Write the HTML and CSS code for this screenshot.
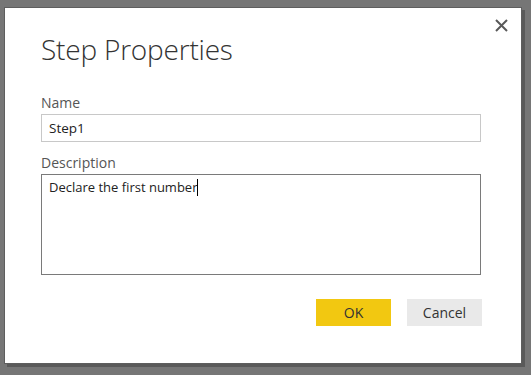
FILE: index.html
```html
<html lang="en"><head>
    <meta charset="UTF-8">
    <meta name="viewport" content="width=device-width, initial-scale=1.0">
    <title>Step Properties</title>
    <link rel="stylesheet" href="styles.css">
</head>
<body>
    <div class="dialog">
        <div class="fechar">
            <svg width="13" height="13" viewBox="0 0 13 13">
                <path d="M1 1 L12 12 M12 1 L1 12" stroke="#595959" stroke-width="2" fill="none"/>
            </svg>
        </div>
        <div class="titulo">Step Properties</div>

        <div class="campo">
            <label for="nome">Name</label>
            <input type="text" id="nome" value="Step1">
        </div>

        <div class="campo">
            <label for="descricao">Description</label>
            <div class="area">Declare the first number<span class="cursor"></span></div>
        </div>

        <div class="botoes">
            <button class="ok">OK</button>
            <button class="cancelar">Cancel</button>
        </div>
    </div>
</body>
</html>
```

FILE: styles.css
```css
body {
    margin: 0;
    padding: 0;
    font-family: "Open Sans", "Noto Sans", sans-serif;
    background: #767676;
    height: 100vh;
}

/*caixa branca do dialogo*/
.dialog {
    position: relative;
    box-sizing: border-box;
    margin: 7px 0 0 4px;
    width: 518px;
    height: 357px;
    background: #fff;
    border: 1px solid #5e5e5e;
    box-shadow: 3px 3px 0 #5a5a5a;
    padding: 0 39px 0 36px;
}

.fechar {
    position: absolute;
    top: 11px;
    right: 13px;
    width: 13px;
    height: 13px;
}

.fechar svg {
    display: block;
}

.titulo {
    font-size: 28px;
    font-weight: 300;
    color: #333;
    padding-top: 21px;
    line-height: 40px;
    margin-bottom: 25px;
    letter-spacing: -0.2px;
}

.campo {
    display: flex;
    flex-direction: column;
    margin-bottom: 12px;
}

.campo label {
    font-size: 14px;
    color: #555;
    line-height: 18px;
    margin-bottom: 2px;
}

input {
    box-sizing: border-box;
    width: 440px;
    height: 28px;
    border: 1px solid #c8c8c8;
    padding: 0 7px;
    font-family: inherit;
    font-size: 13.5px;
    color: #222;
    outline: none;
    margin: 0;
}

/*caixa da descricao*/
.area {
    box-sizing: border-box;
    width: 440px;
    height: 101px;
    border: 1px solid #7a7a7a;
    padding: 3px 7px;
    font-size: 13px;
    color: #222;
    line-height: 18px;
}

.cursor {
    display: inline-block;
    width: 1px;
    height: 17px;
    background: #000;
    vertical-align: -4px;
}

.botoes {
    display: flex;
    justify-content: flex-end;
    gap: 16px;
    margin-top: 24px;
}

button {
    width: 75px;
    height: 27px;
    border: none;
    font-family: inherit;
    font-size: 14px;
    color: #333;
    padding: 0;
}

.ok {
    background-color: #f2c811;
}

.cancelar {
    background-color: #e9e9e9;
}
```
